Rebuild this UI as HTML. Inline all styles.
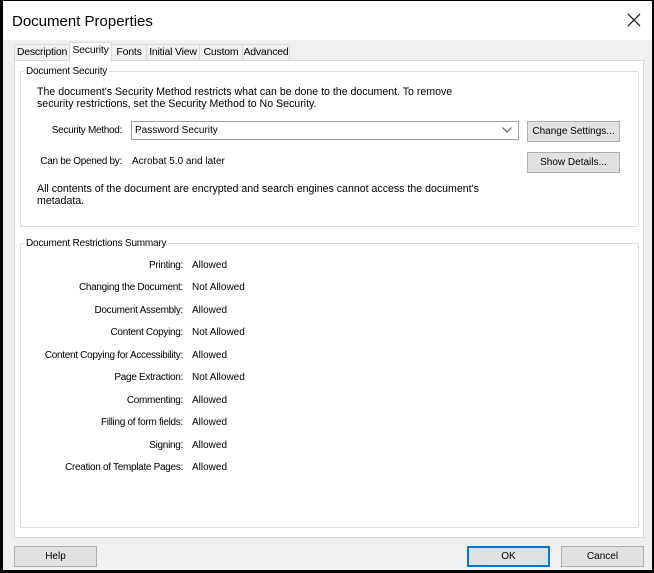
<!DOCTYPE html>
<html><head><meta charset="utf-8"><style>
*{margin:0;padding:0;box-sizing:border-box}
html,body{width:654px;height:573px;overflow:hidden;background:#000}
body{font-family:"Liberation Sans",sans-serif;font-size:10px;color:#000;position:relative}
.win{position:absolute;left:3px;top:1px;width:649px;height:569px;background:#f0f0f0}
.title{position:absolute;left:0;top:0;width:649px;height:39px;background:#fff}
.t{position:absolute;white-space:nowrap;line-height:12px}
.p{font-size:10.6px}
.tab{position:absolute;top:43px;height:17px;border:1px solid #d9d9d9;border-bottom:none;background:#f0f0f0;text-align:center;line-height:15px;font-size:10.5px;letter-spacing:-0.2px}
.panel{position:absolute;left:11px;top:59px;width:630px;height:478px;background:#fff;border:1px solid #d9d9d9}
.grp{position:absolute;border:1px solid #dcdcdc;border-radius:2px}
.btn{position:absolute;height:21px;background:#e1e1e1;border:1px solid #adadad;text-align:center;line-height:19px}
.r{text-align:right;width:170px;letter-spacing:-0.3px}
</style></head><body><div class="win">
<div class="title"></div>
<div class="t" style="left:9px;top:12px;font-size:15px;line-height:18px">Document Properties</div>
<svg style="position:absolute;left:624px;top:12px" width="14" height="14"><path d="M1 1L13 13M13 1L1 13" stroke="#222" stroke-width="1.3"/></svg>
<div class="tab" style="left:11px;width:56px">Description</div>
<div class="tab" style="left:108px;width:36px">Fonts</div>
<div class="tab" style="left:143px;width:54px">Initial View</div>
<div class="tab" style="left:196px;width:44px">Custom</div>
<div class="tab" style="left:239px;width:48px">Advanced</div>
<div class="panel"></div>
<div class="tab" style="left:66px;top:41px;height:20px;width:43px;background:#fff;z-index:2">Security</div>
<div class="grp" style="left:17px;top:70px;width:619px;height:156px"></div>
<div class="t" style="left:21px;top:65px;background:#fff;padding:0 2px;letter-spacing:-0.2px">Document Security</div>
<div class="t p" style="left:34px;top:85px">The document's Security Method restricts what can be done to the document. To remove</div>
<div class="t p" style="left:34px;top:97px">security restrictions, set the Security Method to No Security.</div>
<div class="t r" style="left:-51px;top:124px">Security Method:</div>
<div style="position:absolute;left:128px;top:120px;width:388px;height:19px;border:1px solid #a0a0a0;background:#fff"></div>
<div class="t" style="left:132px;top:124px">Password Security</div>
<svg style="position:absolute;left:499px;top:126px" width="10" height="6"><path d="M0.5 0.5L5 5L9.5 0.5" stroke="#555" fill="none"/></svg>
<div class="btn" style="left:524px;top:120px;width:93px">Change Settings...</div>
<div class="btn" style="left:524px;top:151px;width:93px">Show Details...</div>
<div class="t r" style="left:-51px;top:155px">Can be Opened by:</div>
<div class="t" style="left:129px;top:155px">Acrobat 5.0 and later</div>
<div class="t p" style="left:34px;top:182px">All contents of the document are encrypted and search engines cannot access the document's</div>
<div class="t p" style="left:34px;top:194px">metadata.</div>
<div class="grp" style="left:17px;top:242px;width:619px;height:285px"></div>
<div class="t" style="left:21px;top:237px;background:#fff;padding:0 2px;letter-spacing:-0.2px">Document Restrictions Summary</div>
<div class="t r" style="left:10px;top:259px">Printing:</div><div class="t" style="left:189px;top:259px">Allowed</div>
<div class="t r" style="left:10px;top:281px">Changing the Document:</div><div class="t" style="left:189px;top:281px">Not Allowed</div>
<div class="t r" style="left:10px;top:304px">Document Assembly:</div><div class="t" style="left:189px;top:304px">Allowed</div>
<div class="t r" style="left:10px;top:326px">Content Copying:</div><div class="t" style="left:189px;top:326px">Not Allowed</div>
<div class="t r" style="left:10px;top:349px">Content Copying for Accessibility:</div><div class="t" style="left:189px;top:349px">Allowed</div>
<div class="t r" style="left:10px;top:371px">Page Extraction:</div><div class="t" style="left:189px;top:371px">Not Allowed</div>
<div class="t r" style="left:10px;top:394px">Commenting:</div><div class="t" style="left:189px;top:394px">Allowed</div>
<div class="t r" style="left:10px;top:416px">Filling of form fields:</div><div class="t" style="left:189px;top:416px">Allowed</div>
<div class="t r" style="left:10px;top:439px">Signing:</div><div class="t" style="left:189px;top:439px">Allowed</div>
<div class="t r" style="left:10px;top:461px">Creation of Template Pages:</div><div class="t" style="left:189px;top:461px">Allowed</div>
<div class="btn" style="left:11px;top:545px;width:83px">Help</div>
<div class="btn" style="left:464px;top:545px;width:83px;border:2px solid #0078d7;line-height:17px">OK</div>
<div class="btn" style="left:558px;top:545px;width:83px">Cancel</div>
</div></body></html>
